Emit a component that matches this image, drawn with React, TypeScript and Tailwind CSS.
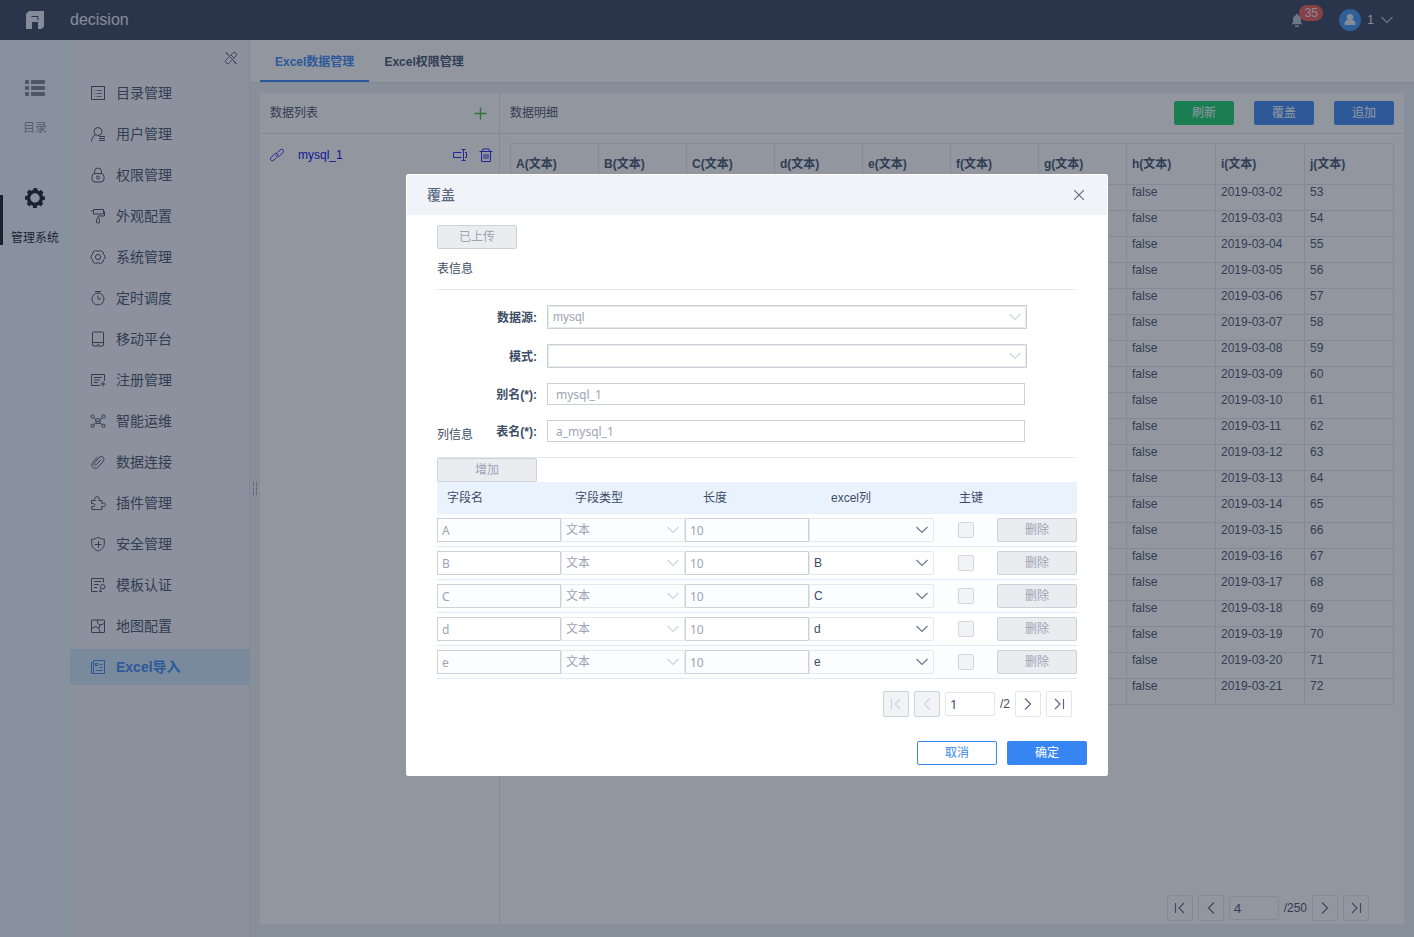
import { useState } from 'react'
import type { ReactNode } from 'react'

const menu = [
    { label: '目录管理', icon: 'catalog' },
    { label: '用户管理', icon: 'user' },
    { label: '权限管理', icon: 'lock' },
    { label: '外观配置', icon: 'roller' },
    { label: '系统管理', icon: 'system' },
    { label: '定时调度', icon: 'timer' },
    { label: '移动平台', icon: 'mobile' },
    { label: '注册管理', icon: 'register' },
    { label: '智能运维', icon: 'nodes' },
    { label: '数据连接', icon: 'clip' },
    { label: '插件管理', icon: 'plugin' },
    { label: '安全管理', icon: 'shield' },
    { label: '模板认证', icon: 'template' },
    { label: '地图配置', icon: 'map' },
    { label: 'Excel导入', icon: 'excel' },
]

const icons: Record<string, ReactNode> = {
    catalog: <><rect x="1.5" y="1.5" width="13" height="13" /><path d="M4 5.500h1M6.500 5.500H12M4 8.500h1M6.500 8.500H12M4 11.500h1M6.500 11.500H12" strokeOpacity=".7" /></>,
    user: <><circle cx="8" cy="5.500" r="4" /><path d="M5.500 8.800C3 10 1.700 12 1.500 15.500M9 10.500h6M9 12.500h6M9 14.500h6" /></>,
    lock: <><rect x="2" y="6.500" width="12" height="8.500" rx="3" /><path d="M4.500 6.500V4.500a3.500 3.500 0 0 1 7 0v2" /><circle cx="8" cy="10.500" r="1.500" /></>,
    roller: <><path d="M3.500 1.500h10v4.500h-10zM3.500 3H1M13.500 3.500h1v4.500H8v2" /><rect x="6.500" y="10.500" width="3" height="4.500" rx="1" /></>,
    system: <><path d="M5.500 1.500Q8 3 10.500 1.500L13 3Q12.900 5.800 15 7v2q-2.100 1.200-2 4l-2.500 1.500Q8 13 5.500 14.500L3 13q.1-2.800-2-4V7q2.100-1.200 2-4z" /><circle cx="8" cy="8" r="2.600" /></>,
    timer: <><circle cx="8" cy="9" r="6" /><path d="M8 5.500V9h3M5 1.500h6M8 1.500V3" /></>,
    mobile: <><rect x="2.500" y="1" width="11" height="14" rx="1" /><path d="M2.500 11.500h11M7 13.300h2" /></>,
    register: <><path d="M10 13.500H1.500v-11h13V9M4 5.500h8M4 8h6M4 10.500h4M10.500 12h5M13 9.500v5" /></>,
    nodes: <><circle cx="2.500" cy="3.500" r="1.600" /><circle cx="13.500" cy="3.500" r="1.600" /><circle cx="2.500" cy="12.800" r="1.600" /><circle cx="13.500" cy="12.800" r="1.600" /><path d="M3.700 4.600 6 6.800M12.300 4.600 10 6.800M3.700 11.700 6 9.700M12.300 11.700 10 9.700M5.500 6.500c1.500-1 3.500-1 5 0L9.500 10.500h-3zM6.500 7.500 8 9l1.500-1.500" /></>,
    clip: <path d="m11 5.500-4.700 5.300c-1.300 1.300-3-.2-2-1.600L9 3.600c2.600-2.700 6.500.4 4.400 3.500l-5 5.700C4.700 16.700-.3 12.300 2.700 8.500l4.800-5.600" />,
    plugin: <path d="M1.500 5.500h3.700c-1.400-2 0-3.800 1.800-3.800s3.200 1.800 1.800 3.800h3v3c2-1.200 3.700-.2 3.700 1.300s-1.700 2.500-3.700 1.400v3.300h-10v-3c2 .7 3-.3 3-1.400S3.500 8 1.500 8.700z" />,
    shield: <path d="M8 1.200c2 1.500 4 2 6.300 2v4.500c0 3.500-2.500 5.800-6.300 7.300C4.200 13.500 1.700 11.200 1.700 7.700V3.200C4 3.200 6 2.700 8 1.200zM4.500 8.500h7M8.500 4.800v7" />,
    template: <><path d="M7.500 14.500h-6v-13h12v4M4 4.500h7.500M4 7.500h5M4 10.500h3M11 11.500 9.500 14.500H12" /><circle cx="12.700" cy="9.700" r="2.200" /></>,
    map: <><rect x="1.500" y="2" width="13" height="12.500" rx=".5" /><path d="M7.500 2v3l2.500 2 4.500-1.500M10 7l-1 3.500 1 4M9 10.500l-3-2-4.500 2" /></>,
    excel: <><path d="M3.500 14.500h11v-13h-11zM3.500 3.500h-2v11h2M9.500 5.500h3M9.500 8.500h3M6 11.500h6.500" /><rect x="5.500" y="4.500" width="2" height="2" /></>,
    unpin: <path d="m2 2 12.500 12.500M7 5.500l3.200-3.400c2-2 5.600 1.600 3.600 3.600L10.500 9M9 10.700l-3.200 3.200c-2 2-5.600-1.600-3.600-3.600L5.500 7M11 12l2.500 2.500M5 4 2.500 1.500M8 4.500l3.500 3.500" />,
    link: <path d="M8.500 5.500 11 3c2.300-2 4.800.5 2.700 2.800L10.500 9C9 10.500 6.800 9.500 7 7.700M7.500 10.500 5 13c-2.300 2-4.800-.5-2.700-2.800L5.500 7C7 5.500 9.200 6.500 9 8.300" />,
    rename: <><path d="M9.500 5.500h-8v5h8M13 5.500h1.500v5H13M9.500 2.500h4M9.500 13.500h4M11.500 2.500v11" /></>,
    trash: <path d="M1.500 4.500h13M4 4.500l1-2.500h6l1 2.500M3.500 4.500V14.500h9v-10M6 7v5M8 7v5M10 7v5" />,
}

function Icon({ name, size = 16 }: { name: string; size?: number }) {
    return (
        <svg width={size} height={size} viewBox="0 0 16 16" fill="none" stroke="currentColor" strokeWidth="1" className="shrink-0">
            {icons[name]}
        </svg>
    )
}

function Chevron({ className = '' }: { className?: string }) {
    return (
        <svg width="12" height="8" viewBox="0 0 12 8" fill="none" stroke="currentColor" strokeWidth="1.2" className={className}>
            <path d="m.5 1 5.500 5.500L11.500 1" />
        </svg>
    )
}

const inputFont = 'font-["Noto_Sans","Noto_Sans_CJK_SC",sans-serif]'
const disabledButton = 'block h-6 rounded-xs border border-[#cfd1d8] bg-[#ebecf0] text-[#9ea4b3]'

const columns = ['A', 'B', 'C', 'd', 'e', 'f', 'g', 'h', 'i', 'j']
const rows = Array.from({ length: 20 }, (_, i) => ({
    h: 'false',
    i: `2019-03-${String(i + 2).padStart(2, '0')}`,
    j: String(53 + i),
})) as Record<string, string>[]

const pagerPaths = {
    first: 'M3.500 3v10M12 3 7 8l5 5',
    prev: 'M11 2.500 5.500 8l5.500 5.500',
    next: 'M5 2.500 10.500 8 5 13.500',
    last: 'M12.500 3v10M4 3l5 5-5 5',
}

function PagerButton({ kind, label, disabled = false }: { kind: keyof typeof pagerPaths; label: string; disabled?: boolean }) {
    return (
        <button
            aria-label={label}
            disabled={disabled}
            className="flex size-[26px] items-center justify-center rounded-xs border border-[#e4e6eb] text-[#5b6880] disabled:border-[#cfd1d8] disabled:bg-[#f2f3f7] disabled:text-[#d0d3db]"
        >
            <svg width="16" height="16" viewBox="0 0 16 16" fill="none" stroke="currentColor" strokeWidth="1.2">
                <path d={pagerPaths[kind]} />
            </svg>
        </button>
    )
}

function Pager({ page, total, atStart = false }: { page: string; total: number; atStart?: boolean }) {
    const [value, setValue] = useState(page)
    return (
        <div className="flex items-center justify-end gap-[5px]">
            <PagerButton kind="first" label="首页" disabled={atStart} />
            <PagerButton kind="prev" label="上一页" disabled={atStart} />
            <input
                aria-label="页码"
                value={value}
                onChange={(e) => setValue(e.target.value)}
                className={`h-6 w-[50px] rounded-xs border border-[#e4e6eb] px-1 text-[13px] ${inputFont}`}
            />
            <span>/{total}</span>
            <PagerButton kind="next" label="下一页" />
            <PagerButton kind="last" label="末页" />
        </div>
    )
}

function Header() {
    return (
        <header className="flex h-10 items-center bg-[#313c58] pr-[21px] text-[#e6e9f0]">
            <div className="flex w-[70px] justify-center">
                <svg width="18" height="18" viewBox="0 0 18 18">
                    <path d="M3 0h15v15.500L15.500 18H12v-7H6v7H0V3z" fill="currentColor" />
                    <path d="M5.500 5.500h6.500V9" fill="none" stroke="#313c58" />
                </svg>
            </div>
            <span className="text-base">decision</span>
            <div className="relative mr-9 ml-auto">
                <svg width="12" height="13" viewBox="0 0 12 13" fill="#b9bfcc" className="block">
                    <path d="M5 0h2v1.300c2 .5 3 2 3 4v3.200l1.500 1.700H.5L2 8.500V5.300c0-2 1-3.500 3-4zM4 11.500h4V13H4z" />
                </svg>
                <span className="absolute -top-[9px] left-2 h-4 w-6 rounded-full bg-[#e65251] text-center text-xs leading-4">35</span>
            </div>
            <svg width="22" height="22" viewBox="0 0 22 22">
                <circle cx="11" cy="11" r="11" fill="#3a90ee" />
                <path d="M11 5a3.200 3.200 0 0 1 2.200 5.700c2.300.6 3.300 1.800 3.300 4.300 0 .7-.5 1-1 1h-9c-.5 0-1-.3-1-1 0-2.500 1-3.700 3.300-4.300A3.200 3.200 0 0 1 11 5z" fill="#e6e9f0" />
            </svg>
            <button className="ml-1.5 flex items-center gap-[7px] text-xs">
                1 <Chevron className="text-[#b9bfcc]" />
            </button>
        </header>
    )
}

function Rail() {
    return (
        <nav className="w-[70px] shrink-0 bg-[#edf4fc] pt-[38px] text-xs">
            <a href="#catalog" className="flex h-[110px] flex-col items-center gap-[22px] text-[#8a8f9c]">
                <svg width="20" height="20" viewBox="0 0 20 20" fill="#787f90">
                    <rect y="2" width="4" height="4" rx="1" /><rect x="6" y="2" width="14" height="4" rx="1" />
                    <rect y="8" width="4" height="4" rx="1" /><rect x="6" y="8" width="14" height="4" rx="1" />
                    <rect y="14" width="4" height="4" rx="1" /><rect x="6" y="14" width="14" height="4" rx="1" />
                </svg>
                目录
            </a>
            <a href="#system" className="relative flex flex-col items-center gap-[22px] text-[#12161f]">
                <span className="absolute top-[7px] left-0 h-[50px] w-[3px] bg-[#12161f]" />
                <svg width="20" height="20" viewBox="0 0 20 20" fill="none" stroke="currentColor">
                    <circle cx="10" cy="10" r="6.500" strokeWidth="3.500" />
                    <circle cx="10" cy="10" r="8.800" strokeWidth="2.400" strokeDasharray="3.900 3.010" strokeDashoffset="1.950" />
                </svg>
                管理系统
            </a>
        </nav>
    )
}

function SideMenu() {
    return (
        <aside className="w-[180px] shrink-0 border-r border-[#dcdfe6] bg-[#f4f5fb] text-sm text-[#3d4d66]">
            <div className="flex h-[35px] justify-end pt-2.5 pr-[11px]">
                <button aria-label="取消固定" className="h-4"><Icon name="unpin" size={14} /></button>
            </div>
            <ul className="flex flex-col gap-[5px]">
                {menu.map((item) => {
                    const active = item.icon === 'excel'
                    return (
                        <li key={item.icon}>
                            <a
                                href={`#${item.icon}`}
                                className={`flex h-9 items-center gap-2.5 pl-5 ${active ? 'bg-[#cfe6fb] font-bold text-[#3685f2]' : ''}`}
                            >
                                <Icon name={item.icon} />
                                {item.label}
                            </a>
                        </li>
                    )
                })}
            </ul>
        </aside>
    )
}

function DataList() {
    return (
        <section className="w-60 shrink-0 border-r border-[#e4e6eb]">
            <div className="flex h-[41px] items-center justify-between border-b border-[#e4e6eb] pr-3 pl-2.5">
                数据列表
                <button aria-label="新增" className="text-[#3fb84a]">
                    <svg width="13" height="13" viewBox="0 0 13 13" stroke="currentColor" strokeWidth="1.400">
                        <path d="M6.500 .5v12M.5 6.500h12" />
                    </svg>
                </button>
            </div>
            <div className="flex h-[42px] items-center pr-[5px] pl-[9px] text-[#2020ee]">
                <Icon name="link" />
                <a href="#mysql_1" className="mr-auto ml-[13px] text-[#0000ee]">mysql_1</a>
                <button aria-label="重命名" className="mr-2.5"><Icon name="rename" /></button>
                <button aria-label="删除数据"><Icon name="trash" /></button>
            </div>
        </section>
    )
}

function DataDetail() {
    return (
        <section className="flex min-w-0 flex-1 flex-col">
            <div className="flex h-[41px] shrink-0 items-center gap-5 border-b border-[#e4e6eb] px-2.5">
                <span className="mr-auto">数据明细</span>
                <button className="h-6 w-[60px] rounded-xs bg-[#13ce66] text-white">刷新</button>
                <button className="h-6 w-[60px] rounded-xs bg-[#3685f2] text-white">覆盖</button>
                <button className="h-6 w-[60px] rounded-xs bg-[#3685f2] text-white">追加</button>
            </div>
            <div className="px-2.5 pt-[9px]">
                <table className="w-full table-fixed border-collapse text-left">
                    <colgroup>
                        <col span={7} className="w-[88px]" />
                        <col span={3} />
                    </colgroup>
                    <thead>
                        <tr className="h-[41px]">
                            {columns.map((c) => (
                                <th key={c} className="border border-[#e4e6eb] px-[5px]">{c}(文本)</th>
                            ))}
                        </tr>
                    </thead>
                    <tbody>
                        {rows.map((row) => (
                            <tr key={row.j} className="h-[26px]">
                                {columns.map((c) => (
                                    <td key={c} className="border border-[#e4e6eb] px-[5px] align-top leading-[14px]">{row[c]}</td>
                                ))}
                            </tr>
                        ))}
                    </tbody>
                </table>
            </div>
            <div className="mt-auto pr-[35px] pb-[3px]">
                <Pager page="4" total={250} />
            </div>
        </section>
    )
}

function SelectBox({ id, label, value, disabled = false, framed = false }: { id?: string; label?: string; value: string; disabled?: boolean; framed?: boolean }) {
    return (
        <div className={`relative ${disabled ? 'text-[#9ea4b3]' : 'text-[#3d4d66]'} ${framed ? 'border border-[#cfd1d9]' : ''}`}>
            <select
                id={id}
                aria-label={label}
                disabled={disabled}
                defaultValue={value}
                className={`block w-full appearance-none rounded-xs border border-[#e6e8ec] pr-6 pl-1 opacity-100 ${framed ? 'h-[22px]' : 'h-6'}`}
            >
                <option value={value}>{value}</option>
            </select>
            <Chevron className={`pointer-events-none absolute ${framed ? 'top-[7px] right-[5px]' : 'top-2 right-1.5'} ${disabled ? 'text-[#cfd3db]' : 'text-[#6b7890]'}`} />
        </div>
    )
}

function FormRow({ id, label, lead, children }: { id: string; label: string; lead?: string; children: ReactNode }) {
    return (
        <div className="flex items-center">
            <div className="flex w-[110px] shrink-0 items-center pr-2.5">
                {lead && <span className="pt-2 leading-[14px]">{lead}</span>}
                <label htmlFor={id} className="ml-auto pt-px font-bold">{label}</label>
            </div>
            {children}
        </div>
    )
}

const fields = [
    { name: 'A', excel: '' },
    { name: 'B', excel: 'B' },
    { name: 'C', excel: 'C' },
    { name: 'd', excel: 'd' },
    { name: 'e', excel: 'e' },
]

function FieldTable() {
    return (
        <table className="w-full table-fixed border-separate border-spacing-0 text-left">
            <colgroup>
                <col className="w-[124px]" />
                <col className="w-[124px]" />
                <col className="w-[124px]" />
                <col className="w-[125px]" />
                <col />
                <col className="w-20" />
            </colgroup>
            <thead>
                <tr className="h-8 bg-[#eaf2fe]">
                    <th className="pl-2.5 font-normal">字段名</th>
                    <th className="pl-3.5 font-normal">字段类型</th>
                    <th className="pl-[18px] font-normal">长度</th>
                    <th className="pl-[22px] font-normal">excel列</th>
                    <th className="pl-[25px] font-normal">主键</th>
                    <th />
                </tr>
            </thead>
            <tbody>
                {fields.map((f) => (
                    <tr key={f.name} className="h-[33px] odd:bg-[#fbfdff] *:border-b *:border-[#dce9f8]">
                        <td>
                            <input aria-label="字段名" disabled defaultValue={f.name} className={`block h-6 w-full border border-[#cfd1d9] px-1 text-[#9ea4b3] ${inputFont}`} />
                        </td>
                        <td><SelectBox label="字段类型" value="文本" disabled /></td>
                        <td>
                            <input aria-label="长度" disabled defaultValue="10" className={`block h-6 w-full border border-[#cfd1d9] px-1 text-[#9ea4b3] ${inputFont}`} />
                        </td>
                        <td><SelectBox label="excel列" value={f.excel} /></td>
                        <td className="pl-6">
                            <input type="checkbox" aria-label="主键" disabled className="block size-4 appearance-none rounded-xs border border-[#d4d6dd] bg-[#f2f3f7]" />
                        </td>
                        <td><button disabled className={`w-full ${disabledButton}`}>删除</button></td>
                    </tr>
                ))}
            </tbody>
        </table>
    )
}

function CoverDialog() {
    const textInput = `h-[22px] w-[478px] border border-[#cfd1d9] px-2 text-[#9ea4b3] ${inputFont}`
    return (
        <div role="dialog" aria-label="覆盖" className="w-[702px] rounded-xs border border-white bg-white">
            <div className="flex h-10 items-center justify-between bg-[#f2f3f8] pr-[23px] pl-5">
                <h2 className="text-sm font-medium text-[#5b6880]">覆盖</h2>
                <button aria-label="关闭" className="text-[#5b6880]">
                    <svg width="10" height="10" viewBox="0 0 10 10" stroke="currentColor" strokeWidth="1.1">
                        <path d="m0 0 10 10M10 0 0 10" />
                    </svg>
                </button>
            </div>
            <div className="px-[30px] pt-2.5">
                <button disabled className={`w-20 ${disabledButton}`}>已上传</button>
                <h3 className="flex h-[41px] items-center border-b border-[#e6e8ec]">表信息</h3>
                <div className="flex flex-col gap-[15px] py-[15px]">
                    <FormRow id="source" label="数据源:">
                        <div className="w-[480px]"><SelectBox id="source" value="mysql" disabled framed /></div>
                    </FormRow>
                    <FormRow id="schema" label="模式:">
                        <div className="w-[480px]"><SelectBox id="schema" value="" disabled framed /></div>
                    </FormRow>
                    <FormRow id="alias" label="别名(*):">
                        <input id="alias" disabled defaultValue="mysql_1" className={textInput} />
                    </FormRow>
                    <FormRow id="table" label="表名(*):" lead="列信息">
                        <input id="table" disabled defaultValue="a_mysql_1" className={textInput} />
                    </FormRow>
                </div>
                <div className="border-t border-[#e6e8ec]">
                    <button disabled className={`w-[100px] ${disabledButton}`}>增加</button>
                </div>
                <FieldTable />
                <div className="pt-3 pr-[5px]">
                    <Pager page="1" total={2} atStart />
                </div>
            </div>
            <div className="flex justify-end gap-2.5 px-5 pt-6 pb-2.5">
                <button className="h-6 w-20 rounded-xs border border-[#3685f2] text-[#3685f2]">取消</button>
                <button className="h-6 w-20 rounded-xs bg-[#3685f2] text-white">确定</button>
            </div>
        </div>
    )
}

export default function App() {
    return (
        <div className='relative flex min-h-screen flex-col bg-[#ebf1f7] font-["Liberation_Sans","Noto_Sans_CJK_SC",sans-serif] text-xs text-[#3d4d66]'>
            <Header />
            <div className="flex flex-1">
                <Rail />
                <SideMenu />
                <main className="flex min-w-0 flex-1 flex-col">
                    <div role="tablist" className="flex h-[43px] border-b border-[#dcdfe6] bg-white pl-2.5 font-bold">
                        <button role="tab" aria-selected="true" className="border-b-2 border-[#3685f2] px-[15px] pt-1 text-[#3685f2]">Excel数据管理</button>
                        <button role="tab" aria-selected="false" className="border-b-2 border-transparent px-[15px] pt-1">Excel权限管理</button>
                    </div>
                    <div className="flex flex-1 pt-2.5 pr-2.5 pb-[13px]">
                        {/* Drag handle */}
                        <div className="flex w-2.5 items-center justify-center pb-10">
                            <svg width="4" height="13" viewBox="0 0 4 13" stroke="#6b7890" strokeDasharray="1 1">
                                <path d="M.5 0v13M3.500 0v13" />
                            </svg>
                        </div>
                        <div className="flex min-w-0 flex-1 bg-white">
                            <DataList />
                            <DataDetail />
                        </div>
                    </div>
                </main>
            </div>

            {/* Mask and dialog */}
            <div className="absolute inset-0 flex items-start justify-center bg-[#232e40]/50 pt-[174px] pl-[100px]">
                <CoverDialog />
            </div>
        </div>
    )
}
